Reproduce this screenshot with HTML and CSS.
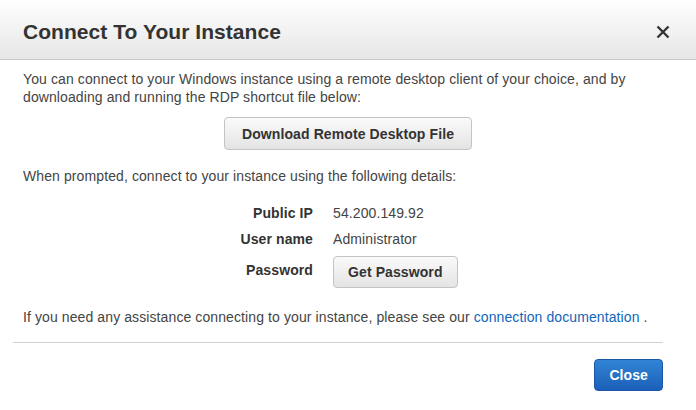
FILE: index.html
```html
<!DOCTYPE html>
<html lang="en">
<head>
    <meta charset="UTF-8">
    <title>Connect To Your Instance</title>
    <link rel="stylesheet" href="styles.css">
</head>
<body>
    <div class="dialog">
        <div class="dialog-header">
            <h2>Connect To Your Instance</h2>
            <button type="button" class="close-x" aria-label="Close">
                <svg width="14" height="14" viewBox="0 0 14 14">
                    <path d="M1.5 1.5 L12.5 12.5 M12.5 1.5 L1.5 12.5" stroke="#333" stroke-width="2.4" fill="none"/>
                </svg>
            </button>
        </div>

        <div class="dialog-body">
            <p>You can connect to your Windows instance using a remote desktop client of your choice, and by downloading and running the RDP shortcut file below:</p>

            <div class="center">
                <button type="button" class="btn btn-download">Download Remote Desktop File</button>
            </div>

            <p>When prompted, connect to your instance using the following details:</p>

            <div class="details">
                <div class="label">Public IP</div>
                <div class="value">54.200.149.92</div>
                <div class="label">User name</div>
                <div class="value">Administrator</div>
                <div class="label">Password</div>
                <div class="value"><button type="button" class="btn btn-small">Get Password</button></div>
            </div>

            <p class="help">If you need any assistance connecting to your instance, please see our <a href="#">connection documentation</a> .</p>
        </div>

        <div class="dialog-footer">
            <button type="button" class="btn btn-primary">Close</button>
        </div>
    </div>
</body>
</html>
```

FILE: styles.css
```css
body {
    margin: 0;
    padding: 0;
    background-color: #fff;
    font-family: "Liberation Sans", Arial, sans-serif;
    font-size: 14px;
    color: #444;
}

.dialog {
    width: 696px;
}

.dialog-header {
    box-sizing: border-box;
    height: 60px;
    display: flex;
    align-items: center;
    justify-content: space-between;
    padding: 5px 26px 0 23px;
    background: linear-gradient(#fff, #e6e6e6);
    border-bottom: 1px solid #c8c8c8;
}

.dialog-header h2 {
    margin: 0;
    font-size: 21px;
    line-height: 24px;
    font-weight: bold;
    color: #333;
    letter-spacing: 0.05px;
}

.close-x {
    background: none;
    border: none;
    padding: 0;
    cursor: pointer;
    display: flex;
}

.dialog-body {
    padding: 10px 23px 0 23px;
    line-height: 18px;
    letter-spacing: 0.1px;
}

.dialog-body p {
    margin: 0;
}

.center {
    text-align: center;
    margin: 11px 0 17px 0;
}

.btn {
    font-family: "Liberation Sans", Arial, sans-serif;
    font-size: 14px;
    font-weight: bold;
    color: #333;
    height: 33px;
    padding: 0 14px;
    background: linear-gradient(#fafafa, #e4e4e4);
    border: 1px solid #c4c4c4;
    border-radius: 4px;
    letter-spacing: 0.1px;
    cursor: pointer;
}

.btn-download {
    padding: 0 17px;
}

.btn-small {
    height: 32px;
    margin-top: 4px;
}

.details {
    display: grid;
    grid-template-columns: 290px auto;
    grid-auto-rows: minmax(26px, auto);
    column-gap: 20px;
    align-items: center;
    margin-top: 15px;
}

.details .label {
    text-align: right;
    font-weight: bold;
    color: #333;
}

.help {
    margin-top: 20px !important;
}

a {
    color: #1166bb;
    text-decoration: none;
}

.dialog-footer {
    margin: 16px 33px 0 13px;
    border-top: 1px solid #d0d0d0;
    padding-top: 16px;
    display: flex;
    justify-content: flex-end;
}

.btn-primary {
    height: 32px;
    padding: 0 14px;
    color: #fff;
    background: linear-gradient(#3184d6, #1b60b8);
    border: 1px solid #1a58a6;
}
```
